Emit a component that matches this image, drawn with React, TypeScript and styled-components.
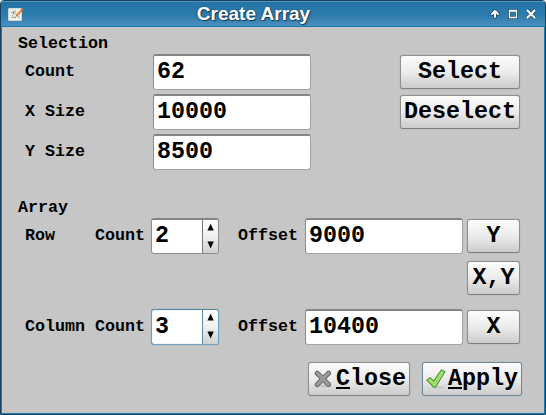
import React from 'react';
import styled, { createGlobalStyle } from 'styled-components';

const GlobalStyle = createGlobalStyle`
  * { box-sizing: border-box; }
  body { margin: 0; background: #fff; overflow: hidden; }
`;

const Window = styled.div`
  width: 546px;
  height: 415px;
  display: flex;
  flex-direction: column;
  border: 1px solid #16415c;
  border-radius: 4px 4px 0 0;
  background: #c6c6c6;
  font-family: 'Liberation Mono', monospace;
  font-weight: 700;
  color: #000;
  overflow: hidden;
`;

const TitleBar = styled.header`
  height: 26px;
  flex: none;
  display: grid;
  grid-template-columns: 52px 1fr 90px;
  align-items: center;
  padding: 0 8px 0 7px;
  border-top: 1px solid #5295bd;
  border-bottom: 1px solid #1b76ab;
  background: linear-gradient(#2374a6, #2d7cae 55%, #4a90bd);
`;

const Title = styled.h1`
  margin: 0;
  font: 700 19px/24px 'Liberation Sans', sans-serif;
  text-align: center;
  white-space: nowrap;
  color: #fff;
  text-shadow: 1px 1px 1px #173d55, 0 0 2px #23536f, -1px 0 1px #2b5f7f;
`;

const WindowControls = styled.div`
  display: flex;
  justify-content: flex-end;
  gap: 6px;
  svg { display: block; }
`;

const Body = styled.main`
  flex: 1;
  padding: 7px 0 0 15px;
  border: solid #2178ac;
  border-width: 0 1px 1px;
`;

const Heading = styled.h2`
  margin: 0;
  height: 20px;
  padding-left: 1px;
  font-size: 16.667px;
  line-height: 20px;
`;

const Row = styled.div<{ $top?: number }>`
  display: flex;
  align-items: center;
  height: 36px;
  margin-top: ${p => p.$top ?? 0}px;
  padding-left: 8px;
`;

const Label = styled.span<{ $w: number }>`
  width: ${p => p.$w}px;
  flex: none;
  font-size: 16.667px;
  line-height: 20px;
  white-space: pre;
`;

const Field = styled.input`
  width: 158px;
  height: 36px;
  flex: none;
  padding: 0 0 1px 3px;
  border: 1px solid #a4a4a4;
  border-top: 2px solid #858585;
  border-left-color: #8c8c8c;
  border-radius: 3px;
  outline: none;
  background: #fff;
  font: 700 23.333px 'Liberation Mono', monospace;
  color: #000;
`;

const Spinner = styled.div<{ $active?: boolean }>`
  display: flex;
  width: 68px;
  height: 36px;
  margin-right: 19px;
  flex: none;
  overflow: hidden;
  border: 1px solid ${p => (p.$active ? '#6f9fbb' : '#8c8c8c')};
  border-top: ${p => (p.$active ? '1px solid #5487a4' : '2px solid #858585')};
  border-radius: 3px;
  background: #fff;
  box-shadow: ${p => (p.$active ? '0 0 1px #5c9cc2, inset 0 0 1px #6f9fbb' : 'none')};
`;

const SpinnerValue = styled.input<{ $active?: boolean }>`
  width: 50px;
  flex: none;
  padding: ${p => (p.$active ? 0 : 0)}px 0 ${p => (p.$active ? 0 : 1)}px 3px;
  border: 0;
  outline: none;
  background: transparent;
  font: 700 23.333px 'Liberation Mono', monospace;
  color: #000;
`;

const Stepper = styled.div<{ $active?: boolean }>`
  flex: 1;
  border-left: 1px solid ${p => (p.$active ? '#5f8ba5' : '#777')};
  background: linear-gradient(#fdfdfd, #f0f0f0 50%, #d0d0d0);
  svg { display: block; }
`;

const Button = styled.button<{ $w: number; $left?: number; $focus?: boolean }>`
  display: flex;
  align-items: center;
  justify-content: center;
  width: ${p => p.$w}px;
  height: 34px;
  flex: none;
  margin: 0 0 0 ${p => p.$left ?? 0}px;
  padding: 0 0 1px;
  border: 1px solid ${p => (p.$focus ? '#708896' : '#8f8f8f')};
  border-bottom-color: ${p => (p.$focus ? '#708896' : '#7f7f7f')};
  border-radius: 3px;
  background: linear-gradient(#fcfcfc, #ececec 50%, #cbcbcb);
  box-shadow: 0 0 1px ${p => (p.$focus ? '#6e9fbb' : '#8a8a8a')};
  font: 700 23.333px 'Liberation Mono', monospace;
  color: #000;
  svg { flex: none; margin: 1px ${p => (p.$focus ? 2 : 4)}px 0 ${p => (p.$focus ? 0 : 2)}px; }
`;

const Mnemonic = styled.span`
  text-decoration: underline;
  text-decoration-thickness: 2px;
  text-underline-offset: 2px;
  text-decoration-skip-ink: none;
`;

const AppIcon = () => (
  <svg width="16" height="16" viewBox="0 0 16 16">
    <rect x=".5" y="2.5" width="13" height="12" rx=".6" fill="#f0f1ec" stroke="#d2d8d8" />
    <path d="M3 6.5h2M7 4v4M8 9l4 3M3.5 11.5h3M10.5 7.5l1 1" stroke="#9aa597" fill="none" />
    <path d="M5.5 5v3.5l-2 2M6 10.5l2 1.5" stroke="#7eaf70" fill="none" />
    <path d="M8.5 9.5l5-5" stroke="#ee8c3e" strokeWidth="2.4" />
    <path d="M13 5l2-1.8" stroke="#d65f32" strokeWidth="2.2" />
    <path d="M7.5 10.7l1.6-.6-1-1z" fill="#6c543e" />
  </svg>
);

const Arrows = () => (
  <svg width="15" height="33" viewBox="0 0 15 33">
    <path d="M7.6 3.8l3.2 6.8H4.4zM7.6 28.4l3.2-6.8H4.4z" fill="#000" />
  </svg>
);

const ShadeIcon = () => (
  <svg width="12" height="12" viewBox="0 0 12 12">
    <g fill="none" strokeLinecap="round" strokeLinejoin="round">
      <path d="M6 9V3.5M3 6l3-3 3 3" stroke="#1d4e6c" strokeWidth="3.8" />
      <path d="M6 9V3.5M3 6l3-3 3 3" stroke="#fff" strokeWidth="2" />
    </g>
  </svg>
);

const MaximizeIcon = () => (
  <svg width="12" height="12" viewBox="0 0 12 12">
    <path d="M2.5 2.5h7v7h-7z" fill="none" stroke="#1d4e6c" strokeWidth="3" />
    <path d="M2.5 2.5h7v7h-7zM2 3h8" fill="none" stroke="#fff" strokeWidth="1.3" />
  </svg>
);

const CloseWindowIcon = () => (
  <svg width="12" height="12" viewBox="0 0 12 12">
    <path d="M2 2l8 8M10 2l-8 8" stroke="#1d4e6c" strokeWidth="3.8" />
    <path d="M2 2l8 8M10 2l-8 8" stroke="#fff" strokeWidth="2.2" />
  </svg>
);

const CrossIcon = () => (
  <svg width="18" height="18" viewBox="0 0 18 18">
    <ellipse cx="10" cy="16" rx="8" ry="1.5" fill="#c5c5c5" />
    <g fill="none" strokeLinecap="round">
      <path d="M3.2 3.2l11.3 11.3M14.5 3.2L3.2 14.5" stroke="#606060" strokeWidth="5" />
      <path d="M3.2 3.2l11.3 11.3M14.5 3.2L3.2 14.5" stroke="#9b9b9b" strokeWidth="3.2" />
    </g>
  </svg>
);

const CheckIcon = () => (
  <svg width="20" height="20" viewBox="0 0 20 20">
    <ellipse cx="12" cy="18.3" rx="7" ry="1.2" fill="#c8c8c8" />
    <path
      d="M.8 11.2l3.2-2.5 3.7 3.4L15.4.9l3.6 1.8L9.4 18.2H7.8z"
      fill="#8ed660" stroke="#4b962b" strokeWidth="1.1" strokeLinejoin="round"
    />
    <path d="M2.6 11.2l1.4-1 3.9 3.9L15.8 2.4l1.4.8L8.8 16.6z" fill="none" stroke="#b9ec93" strokeWidth=".9" />
  </svg>
);

export default function App() {
  return (
    <>
      <GlobalStyle />
      <Window>
        <TitleBar>
          <AppIcon />
          <Title>Create Array</Title>
          <WindowControls>
            <ShadeIcon />
            <MaximizeIcon />
            <CloseWindowIcon />
          </WindowControls>
        </TitleBar>
        <Body>
          <Heading>Selection</Heading>
          <Row>
            <Label $w={128}>Count</Label>
            <Field defaultValue="62" />
            <Button $w={120} $left={89}>Select</Button>
          </Row>
          <Row $top={4}>
            <Label $w={128}>X Size</Label>
            <Field defaultValue="10000" />
            <Button $w={120} $left={89}>Deselect</Button>
          </Row>
          <Row $top={4}>
            <Label $w={128}>Y Size</Label>
            <Field defaultValue="8500" />
          </Row>
          <Row $top={-8} />
          <Heading>Array</Heading>
          <Row>
            <Label $w={70}>Row</Label>
            <Label $w={56}>Count</Label>
            <Spinner>
              <SpinnerValue defaultValue="2" />
              <Stepper><Arrows /></Stepper>
            </Spinner>
            <Label $w={67}>Offset</Label>
            <Field defaultValue="9000" />
            <Button $w={53} $left={4}>Y</Button>
          </Row>
          <Row $top={6}>
            <Button $w={53} $left={442}>X,Y</Button>
          </Row>
          <Row $top={13}>
            <Label $w={70}>Column</Label>
            <Label $w={56}>Count</Label>
            <Spinner $active>
              <SpinnerValue $active defaultValue="3" />
              <Stepper $active><Arrows /></Stepper>
            </Spinner>
            <Label $w={67}>Offset</Label>
            <Field defaultValue="10400" />
            <Button $w={53} $left={4}>X</Button>
          </Row>
          <Row $top={16}>
            <Button $w={102} $left={283}>
              <CrossIcon />
              <span><Mnemonic>C</Mnemonic>lose</span>
            </Button>
            <Button $w={100} $left={12} $focus>
              <CheckIcon />
              <span><Mnemonic>A</Mnemonic>pply</span>
            </Button>
          </Row>
        </Body>
      </Window>
    </>
  );
}
